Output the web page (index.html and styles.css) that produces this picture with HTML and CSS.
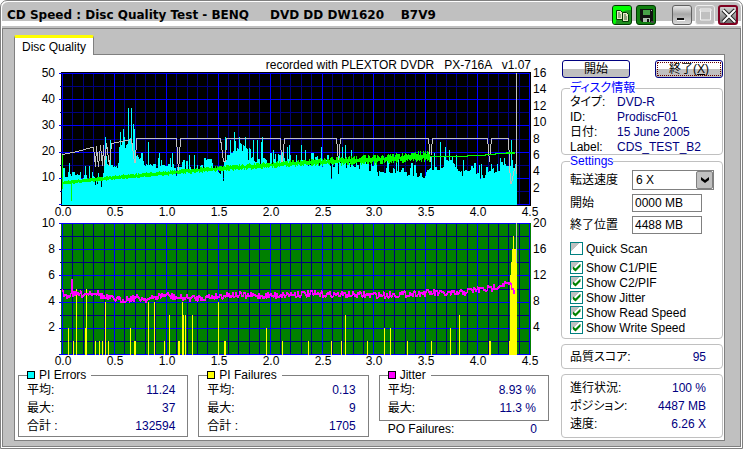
FILE: index.html
```html
<!DOCTYPE html>
<html lang="ja">
<head>
<meta charset="utf-8">
<title>CD Speed : Disc Quality Test</title>
<link rel="stylesheet" href="styles.css">
</head>
<body>
<div class="window">
  <header class="titlebar">
    <h1 class="title">CD Speed : Disc Quality Test - BENQ &nbsp;&nbsp; &nbsp;DVD DD DW1620 &nbsp; &nbsp;B7V9</h1>
    <div class="tools">
      <button class="tool copy" aria-label="Copy"><svg viewBox="0 0 19 19" width="19" height="19"><path d="M0 0H19V4Q8 3 4 12L2 19H0Z" fill="#00ff00"/><path d="M3.500 4.500h4l2 2v7h-6zM9.500 6.500h4l2 2v7h-6z" fill="#e8e8c8" stroke="#003800"/><path d="M5 7h2M5 9h3M5 11h3M11 9h2M11 11h3M11 13h3" stroke="#386038"/></svg></button>
      <button class="tool save" aria-label="Save"><svg viewBox="0 0 19 19" width="19" height="19"><path d="M3 3h13v13H5l-2-2z" fill="#111"/><path d="M6 4h7v5H6z" fill="#48a048"/><path d="M14 4h1v1h-1zM6 12h7v4H6z" fill="#b0c0b0"/><path d="M10 13h2v3h-2z" fill="#111"/><path d="M14 15h3v2h-3z" fill="#484848"/></svg></button>
    </div>
    <div class="controls">
      <button class="control" aria-label="Minimize"><svg viewBox="0 0 18 18" width="18" height="18"><path d="M4 12h7v2H4z" fill="#111"/><path d="M4 14h8v1H4z" fill="#fff"/></svg></button>
      <button class="control maximize" aria-label="Maximize" disabled><svg viewBox="0 0 18 18" width="18" height="18"><path d="M4 3h11v2H4zM4.500 5v9h10V5" fill="none" stroke="#f4f4f4"/></svg></button>
      <button class="control close" aria-label="Close"><svg viewBox="0 0 18 18" width="18" height="18"><path d="M3 3l12 12M15 3L3 15" stroke="#222" stroke-width="4"/><path d="M3 3l12 12M15 3L3 15" stroke="#fff" stroke-width="2"/></svg></button>
    </div>
  </header>
  <main class="client">
    <nav class="tabs"><button class="tab">Disc Quality</button></nav>
    <div class="panel">
      <section class="results">
        <p class="caption">recorded with PLEXTOR DVDR &nbsp; PX-716A &nbsp; v1.07</p>
        <svg class="charts" id="charts" viewBox="15 70 546 298" role="img" aria-label="PI Errors, PI Failures, Jitter"></svg>
        <div class="stats">
          <fieldset class="stat">
            <legend><i class="swatch cyan"></i>PI Errors</legend>
            <dl><div><dt>平均:</dt><dd>11.24</dd></div><div><dt>最大:</dt><dd>37</dd></div><div><dt>合計 :</dt><dd>132594</dd></div></dl>
          </fieldset>
          <fieldset class="stat">
            <legend><i class="swatch yellow"></i>PI Failures</legend>
            <dl><div><dt>平均:</dt><dd>0.13</dd></div><div><dt>最大:</dt><dd>9</dd></div><div><dt>合計 :</dt><dd>1705</dd></div></dl>
          </fieldset>
          <div class="jitter">
            <fieldset class="stat">
              <legend><i class="swatch magenta"></i>Jitter</legend>
              <dl><div><dt>平均:</dt><dd>8.93 %</dd></div><div><dt>最大:</dt><dd>11.3 %</dd></div></dl>
            </fieldset>
            <dl class="po"><div><dt>PO Failures:</dt><dd>0</dd></div></dl>
          </div>
        </div>
      </section>
      <aside class="side">
        <div class="actions">
          <button class="push">開始</button>
          <button class="push default">終了(<u>X</u>)</button>
        </div>
        <fieldset class="group disc">
          <legend>ディスク情報</legend>
          <dl><div><dt>タイプ:</dt><dd>DVD-R</dd></div><div><dt>ID:</dt><dd>ProdiscF01</dd></div><div><dt>日付:</dt><dd>15 June 2005</dd></div><div><dt>Label:</dt><dd>CDS_TEST_B2</dd></div></dl>
        </fieldset>
        <fieldset class="group settings">
          <legend>Settings</legend>
          <div class="fields">
            <label for="speed">転送速度</label>
            <span class="combo"><select id="speed"><option>6 X</option></select><span class="arrow"><svg viewBox="0 0 10 8" width="10" height="8"><path d="M1 1l4 3 4-3v3L5 7 1 4z" fill="#000"/></svg></span></span>
            <label for="start">開始</label>
            <input class="text" id="start" type="text" value="0000 MB">
            <label for="end">終了位置</label>
            <input class="text" id="end" type="text" value="4488 MB">
          </div>
          <div class="checks">
            <label class="quick"><input type="checkbox">Quick Scan</label>
            <label><input type="checkbox" checked>Show C1/PIE</label>
            <label><input type="checkbox" checked>Show C2/PIF</label>
            <label><input type="checkbox" checked>Show Jitter</label>
            <label><input type="checkbox" checked>Show Read Speed</label>
            <label><input type="checkbox" checked>Show Write Speed</label>
          </div>
        </fieldset>
        <dl class="group score"><div><dt>品質スコア:</dt><dd>95</dd></div></dl>
        <dl class="group progress"><div><dt>進行状況:</dt><dd>100 %</dd></div><div><dt>ポジション:</dt><dd>4487 MB</dd></div><div><dt>速度:</dt><dd>6.26 X</dd></div></dl>
      </aside>
    </div>
  </main>
</div>
<script src="charts.js"></script>
</body>
</html>
```
FILE: styles.css
```css
* { box-sizing: border-box; }
body {
  margin: 0;
  background: #fff;
  color: #000;
  font: 12px/14px "Liberation Sans", "Noto Sans CJK JP", sans-serif;
  font-feature-settings: "palt";
}
button, input, select { font: inherit; color: inherit; }
dl, dd, p, h1 { margin: 0; }
dl > div { display: flex; justify-content: space-between; align-items: center; }
dt { white-space: nowrap; }
dd { color: #000080; white-space: nowrap; }
fieldset { margin: 0; min-width: 0; }

.window {
  min-height: 100vh;
  display: flex;
  flex-direction: column;
  border: 1px solid #808080;
  border-radius: 7px 7px 0 0;
  padding: 1px;
  background: #fff;
}
.titlebar {
  display: flex;
  align-items: center;
  height: 26px;
  padding: 0 3px 0 5px;
  border-radius: 6px 6px 0 0;
  background: linear-gradient(#c0c0c0 19px, #fff 19px, #fff 24px, #c0c0c0 24px);
}
.title {
  flex: 1;
  font: bold 12px/16px "DejaVu Sans", sans-serif;
  white-space: nowrap;
}
.tools { display: flex; gap: 4px; margin-right: 16px; }
.controls { display: flex; gap: 3px; }
.tool, .control {
  display: grid;
  place-items: center;
  width: 20px;
  height: 20px;
  padding: 0;
  border-radius: 3px;
  overflow: hidden;
}
.tool { border: 1px solid #003800; background: #209020; }
.save { background: #108010; }
.control {
  border: 1px solid #606060;
  background: linear-gradient(#e8e8e8, #a8a8a8 45%, #d8d8d8);
}
.maximize { border-color: #eee; background: #c0c0c0; }
.close { border: 2px solid #800020; background: linear-gradient(#d0d0d0, #707070); }

.client {
  flex: 1;
  display: flex;
  flex-direction: column;
  padding: 6px 15px 5px 11px;
  border: 1px solid #808080;
  background: #c0c0c0;
}
.tabs { display: flex; }
.tab {
  height: 20px;
  padding: 0 7px;
  border: 1px solid #808080;
  border-top: 3px solid #ff0;
  border-bottom: 0;
  border-radius: 2px 2px 0 0;
  background: #fff;
  margin-bottom: -1px;
  position: relative;
}
.panel {
  flex: 1;
  display: flex;
  border: 1px solid #808080;
  background: #fff;
}
.results { flex: 1; min-width: 0; }
.caption { padding: 3px 30px 0 0; height: 15px; text-align: right; white-space: nowrap; }
.charts { display: block; width: 100%; height: auto; overflow: visible; }

.stats { display: grid; grid-template-columns: repeat(3, 1fr); gap: 10px; padding: 1px 12px 0 3px; }
.stat { padding: 0 12px 1px 8px; border: 1px solid #808080; }
.stat legend {
  display: flex;
  align-items: center;
  gap: 4px;
  height: 12px;
  padding: 0 5px 0 0;
  line-height: 12px;
}
.stat dl > div { height: 18px; }
.swatch { width: 8px; height: 8px; border: 1px solid #000; }
.cyan { background: #0ff; }
.yellow { background: #ff0; }
.magenta { background: #f0f; }
.jitter .stat { padding-bottom: 3px; }
.po { padding: 1px 12px 0 9px; }

.side { width: 162px; margin-right: 1px; }
.actions { display: flex; justify-content: space-between; padding: 5px 0 4px 1px; }
.push {
  width: 68px;
  height: 18px;
  padding: 0;
  border: 1px solid #000080;
  border-radius: 3px;
  background: linear-gradient(#fff 50%, #c0c0c0 50%);
  line-height: 14px;
}
.default { outline: 1px dotted #600; outline-offset: -3px; }
.group { padding: 0 8px; border: 1px solid #c0c0c0; border-radius: 4px; }
.group legend { height: 12px; padding: 0; line-height: 12px; color: #00f; }
.disc dl > div { height: 15px; justify-content: flex-start; }
.disc dt { width: 47px; }
.settings { padding-bottom: 3px; }
.fields {
  display: grid;
  grid-template-columns: 62px 1fr;
  row-gap: 4px;
  align-items: center;
  padding-top: 3px;
}
.combo { position: relative; width: 82px; height: 20px; }
.combo select {
  appearance: none;
  width: 100%;
  height: 20px;
  padding: 0 3px;
  border: 1px solid #808080;
  border-radius: 0;
  background: #fff;
}
.arrow {
  position: absolute;
  inset: 1px 1px 1px auto;
  width: 17px;
  display: grid;
  place-items: center;
  border: 1px solid #808080;
  border-radius: 2px;
  background: #c0c0c0;
  pointer-events: none;
}
.text { width: 70px; height: 18px; padding: 0 2px; border: 1px solid #808080; background: #fff; }
.checks { padding-top: 7px; }
.checks label { display: flex; align-items: center; gap: 3px; height: 15px; white-space: nowrap; }
.checks .quick { margin-bottom: 4px; }
.checks input {
  appearance: none;
  display: grid;
  place-items: center;
  width: 13px;
  height: 13px;
  margin: 0;
  border: 1px solid #008080;
  background: linear-gradient(135deg, #c0c0c0 40%, #fff 40%);
}
.checks input:checked::after {
  content: "";
  width: 8px;
  height: 8px;
  background: #008000;
  clip-path: polygon(0 30%, 38% 62%, 100% 0, 100% 38%, 38% 100%, 0 68%);
}
.score { margin-top: 5px; padding: 4px 16px 4px 8px; }
.score > div { height: 15px; }
.progress { margin-top: 5px; padding: 4px 16px 4px 8px; }
.progress > div { height: 18px; }

.charts text { font-size: 12px; fill: #000; }
.end { text-anchor: end; }
.middle { text-anchor: middle; }
.shapes { shape-rendering: crispEdges; }
.shapes path { fill: none; stroke-width: 1px; }
.shapes .minor { stroke: #000080; }
.shapes .major { stroke: #0000ff; }
.shapes .pie { stroke: #00ffff; }
.shapes .pif { stroke: #ffff00; }
.shapes .read { stroke: #00ff00; }
.shapes .write { stroke: #c0c0c0; }
.shapes .jit { stroke: #ff00ff; }
```
FILE: charts.js
```js
const LEFT = 62, TOP1 = 73, BASE1 = 205, TOP2 = 223, BASE2 = 354, RIGHT = 529;

let seed = 7;
function noise() {
  seed = (seed * 16807) % 2147483647;
  return seed / 2147483647 * 2 - 1;
}

// Linear interpolation over [x, y] pairs.
function at(points, x) {
  for (let i = 1; i < points.length; i++) {
    const [x0, y0] = points[i - 1], [x1, y1] = points[i];
    if (x <= x1) return y0 + (y1 - y0) * (x - x0) / (x1 - x0);
  }
  return points[points.length - 1][1];
}

const path = (cls, d) => `<path class="${cls}" d="${d}"/>`;
const label = (x, y, text, cls = "") => `<text class="${cls}" x="${x}" y="${y + 4}">${text}</text>`;
const line = points => "M" + points.map(p => p.join(" ")).join("L");

function grid(top, base) {
  let minor = "", major = "";
  for (let i = 0; i <= 45; i++) {
    const x = Math.round(LEFT + i * 10.38) + 0.5;
    const d = `M${x} ${top}V${base + 1}`;
    if (i % 5) minor += d; else major += d;
  }
  for (let i = 0; i <= 10; i++) {
    const y = Math.round(top + i * (base - top) / 10) + 0.5;
    if (i % 2) minor += `M60 ${y}H${RIGHT}`; else major += `M59 ${y}H${RIGHT + 1}`;
  }
  return path("minor", minor) + path("major", major);
}

// PI Errors: mean level, spread, and individual peaks by pixel column.
const level = [[62, 11], [67, 12], [90, 10.5], [95, 9], [102, 10], [105, 16], [113, 16], [117, 15], [121, 23],
  [127, 24], [131, 26], [135, 21], [141, 17], [147, 16], [160, 15], [180, 15], [200, 15], [212, 15], [220, 14],
  [225, 16], [228, 20], [236, 22], [250, 18], [265, 17], [285, 17], [310, 16], [345, 16], [370, 15], [400, 13],
  [425, 12], [432, 15], [447, 16], [460, 13], [480, 12], [490, 12], [500, 15], [517, 15]];
const peaks = { 69: 16, 85: 15, 89: 15, 105: 26, 110: 25, 120: 28, 123: 29, 128: 37, 131: 37, 133: 31, 134: 29,
  148: 24, 159: 20, 172: 20, 189: 19, 225: 26, 230: 25, 234: 28, 239: 26, 245: 26, 253: 25, 257: 25, 261: 24,
  262: 26, 273: 21, 287: 22, 289: 23, 301: 23, 305: 21, 321: 22, 339: 20, 342: 22, 345: 23, 351: 21, 396: 18,
  434: 20, 440: 24, 445: 22, 449: 21, 456: 19, 463: 17, 504: 18, 511: 25, 516: 17 };
const dips = { 101: 7, 97: 8, 176: 11, 223: 9, 331: 10, 338: 12, 378: 11, 462: 11, 480: 10 };
let pie = "";
let n = 0;
for (let x = LEFT; x < 517; x++) {
  if (x % 3 !== 1) n = noise();
  const value = peaks[x] || dips[x] || at(level, x) + (n > 0 ? n * n * 4 : n * 2);
  pie += `M${x + 0.5} ${BASE1}V${Math.round(BASE1 - value * 2.62)}`;
}

const writeSpeed = [[62, 154], [77, 151], [91, 147], [93, 147], [95, 166], [96, 146], [98, 166], [100, 145],
  [102, 165], [103, 145], [104, 165], [106, 143], [109, 165], [111, 143], [131, 139], [134, 162], [135, 162],
  [136, 138], [176, 138], [178, 172], [180, 138], [220, 138], [223, 161], [225, 161], [226, 138], [280, 138],
  [281, 161], [282, 161], [284, 138], [336, 138], [338, 161], [340, 138], [428, 138], [430, 161], [432, 138],
  [487, 138], [489, 161], [491, 138], [508, 138], [510, 183], [511, 183], [514, 168]];

const readSpeed = [[62, 183], [110, 178], [200, 170], [270, 165], [300, 163], [370, 160], [430, 156], [515, 152]];
const spread = [[62, 1], [180, 2], [290, 2.5], [360, 4], [430, 5]];
let read = `M62.5 155V189M71.5 183V201`;
for (let x = LEFT; x < 430; x++) {
  const y = at(readSpeed, x), s = at(spread, x);
  read += `M${x + 0.5} ${Math.round(y - 1 - Math.abs(noise()) * s)}V${Math.round(y + 1 + Math.abs(noise()) * s)}`;
}
read += "M430 156.5H467V155.5H485V154.5H495V153.5H515M506 152.5H515";

const jitterLevel = [[62, 292], [66, 295], [80, 293], [90, 292], [95, 291], [105, 297], [122, 299], [135, 297],
  [150, 298], [165, 294], [180, 297], [200, 297], [230, 294], [260, 295], [300, 293], [370, 294], [385, 294],
  [430, 292], [455, 293], [475, 289], [490, 288], [503, 283], [510, 283], [512, 289], [515, 292]];
const jitter = [];
for (let x = LEFT; x < 516; x++) {
  const y = at(jitterLevel, x) + noise() * 3;
  jitter.push([x, x === 72 ? 279 : x === 62 ? 289 : Math.round(y) + 0.5]);
}

const failures = [[68, 2], [73, 1], [76, 5], [85, 2], [86, 5], [95, 1], [99, 1], [102, 1], [105, 4], [108, 1],
  [130, 2], [134, 1], [135, 1], [148, 4], [154, 4], [164, 1], [169, 3], [178, 1], [179, 1], [182, 4], [183, 3],
  [185, 3], [192, 3], [218, 4], [224, 1], [225, 1], [266, 2], [282, 1], [308, 1], [331, 1], [341, 1], [345, 3],
  [367, 1], [384, 2], [390, 2], [407, 1], [431, 1], [450, 2], [459, 3], [489, 1], [490, 1], [509, 1], [510, 6],
  [511, 7], [512, 8], [513, 9], [514, 8], [515, 8], [516, 8]];
const pif = failures.map(([x, v]) => `M${x + 0.5} ${BASE2 + 1}V${Math.round(BASE2 - v * 13.1)}`).join("");

let labels = "";
[50, 40, 30, 20, 10].forEach((v, i) => labels += label(55, 73 + i * 26, v, "end"));
[16, 14, 12, 10, 8, 6, 4, 2].forEach((v, i) => labels += label(533, Math.round(73 + i * 16.4), v));
[10, 8, 6, 4, 2].forEach((v, i) => labels += label(55, 223 + i * 26, v, "end"));
[20, 16, 12, 8, 4].forEach((v, i) => labels += label(533, 223 + i * 26, v));
for (let i = 0; i <= 9; i++) {
  const x = Math.round(63 + i * 51.9);
  labels += label(x, 212, (i / 2).toFixed(1), "middle") + label(x, 361, (i / 2).toFixed(1), "middle");
}

document.getElementById("charts").innerHTML =
  `<g class="shapes"><rect x="61" y="72" width="470" height="134" fill="#000"/>` +
  grid(TOP1, 204) + path("pie", pie) + path("write", line(writeSpeed.map(([x, y]) => [x + 0.5, y + 0.5]))) +
  path("read", read) + path("write", "M516.5 73V174") +
  `<rect x="61" y="223" width="470" height="132" fill="#008000"/>` + grid(TOP2, BASE2) +
  path("pif", pif) + path("jit", line(jitter)) + path("jit", line(jitter.map(([x, y]) => [x, y + 1]))) +
  path("write", "M516.5 223V263") + `</g>` + labels;
```
